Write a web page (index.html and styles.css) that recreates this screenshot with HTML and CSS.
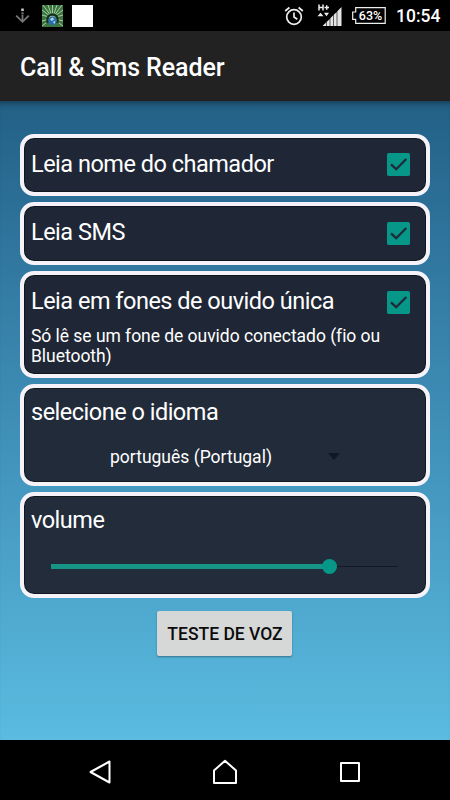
FILE: index.html
```html
<!DOCTYPE html>
<html lang="pt">
<head>
    <meta charset="utf-8" />
    <meta name="viewport" content="width=device-width, initial-scale=1">

    <title>Call &amp; Sms Reader</title>

    <link rel="stylesheet" href="styles.css">
</head>
<body>
    <div class="status-bar">
        <div class="status-left">
            <svg class="icon-download" width="15" height="16" viewBox="0 0 15 16">
                <rect x="6.2" y="0.5" width="2.6" height="2.6" fill="#c4c4c4" />
                <rect x="6.4" y="4.4" width="2.2" height="2" fill="#777" />
                <path d="M7.5 7V14M1.2 7.6L7.5 13.8L13.8 7.6" fill="none" stroke="#777" stroke-width="1.8" />
            </svg>
            <svg class="icon-app" width="21" height="22" viewBox="0 0 21 22">
                <rect width="21" height="22" fill="#3c7544" />
                <path d="M10.5 13L1 0M10.5 13L6 0M10.5 13L10.5 0M10.5 13L15 0M10.5 13L20 0M10.5 13L0 5M10.5 13L0 10M10.5 13L0 16M10.5 13L0 21M10.5 13L21 5M10.5 13L21 10M10.5 13L21 16M10.5 13L21 21" stroke="#a5cf9b" stroke-width="1" />
                <path d="M5.5 18V14A5 4.5 0 0 1 15.5 14V18" fill="none" stroke="#173421" stroke-width="2.4" />
                <circle cx="10.5" cy="15.8" r="4.2" fill="#286db0" />
                <path d="M8 14L11 12.5L12 14.5L9.5 16ZM11 17L13.5 15.5L12.5 19Z" fill="#b5dce8" />
            </svg>
            <div class="icon-blank"></div>
        </div>
        <div class="status-right">
            <svg class="icon-alarm" width="20" height="20" viewBox="0 0 20 20" fill="none" stroke="#eee" stroke-width="1.7">
                <circle cx="10" cy="11" r="7.3" />
                <path d="M10 6.5V11L13.3 13.2M1.2 5L5.4 1.5M18.8 5L14.6 1.5" />
            </svg>
            <svg class="icon-signal" width="25" height="23" viewBox="0 0 25 23">
                <path d="M2 0.5V6.5M6 0.5V6.5M2 3.5H6M7.5 3.5H12M9.7 1.3V5.7" stroke="#eee" stroke-width="1.5" />
                <path d="M0.5 12.3L3.5 8.8L6.5 12.3ZM7 8.8H12L9.5 12.3Z" fill="#eee" />
                <path d="M5.5 22L9 18.5V22ZM9.6 18L12.7 14.9V22H9.6ZM13.3 14.2L16.2 11.3V22H13.3ZM16.8 10.8L19.7 7.9V22H16.8ZM20.3 7.2L24.5 3V22H20.3Z" fill="#e5e5e5" />
            </svg>
            <div class="battery">
                <svg class="battery-shape" width="34" height="18" viewBox="0 0 34 18">
                    <path d="M3.7 0.7H33.2V16.4H3.7V12.4H0.7V5H3.7Z" fill="none" stroke="#eee" stroke-width="1.2" />
                </svg>
                <span class="battery-text">63%</span>
            </div>
            <span class="clock">10:54</span>
        </div>
    </div>

    <div class="app-bar">
        <span class="app-title">Call &amp; Sms Reader</span>
    </div>

    <div class="content">
        <div class="card card-caller">
            <div class="card-row">
                <span class="label">Leia nome do chamador</span>
                <svg class="checkbox" width="23" height="23" viewBox="0 0 23 23">
                    <rect width="23" height="23" rx="1.8" fill="#079788" />
                    <path d="M4 11.3L9.2 16.2L19.3 6" fill="none" stroke="#1f2a3a" stroke-width="2.3" />
                </svg>
            </div>
        </div>

        <div class="card card-sms">
            <div class="card-row">
                <span class="label">Leia SMS</span>
                <svg class="checkbox" width="23" height="23" viewBox="0 0 23 23">
                    <rect width="23" height="23" rx="1.8" fill="#079788" />
                    <path d="M4 11.3L9.2 16.2L19.3 6" fill="none" stroke="#1f2a3a" stroke-width="2.3" />
                </svg>
            </div>
        </div>

        <div class="card card-headset">
            <div class="card-row">
                <span class="label">Leia em fones de ouvido única</span>
                <svg class="checkbox" width="23" height="23" viewBox="0 0 23 23">
                    <rect width="23" height="23" rx="1.8" fill="#079788" />
                    <path d="M4 11.3L9.2 16.2L19.3 6" fill="none" stroke="#1f2a3a" stroke-width="2.3" />
                </svg>
            </div>
            <p class="hint">Só lê se um fone de ouvido conectado (fio ou Bluetooth)</p>
        </div>

        <div class="card card-language">
            <span class="label">selecione o idioma</span>
            <div class="spinner">
                <span class="spinner-text">português (Portugal)</span>
                <div class="spinner-arrow"></div>
            </div>
        </div>

        <div class="card card-volume">
            <span class="label">volume</span>
            <div class="slider">
                <div class="slider-fill" style="width: 80%"></div>
                <div class="slider-thumb"></div>
                <div class="slider-rest"></div>
            </div>
        </div>

        <button class="test-button">TESTE DE VOZ</button>
    </div>

    <div class="nav-bar">
        <svg class="nav-icon" width="26" height="26" viewBox="0 0 26 26">
            <path d="M3.5 13L22.5 2.5V23.5Z" />
        </svg>
        <svg class="nav-icon" width="26" height="26" viewBox="0 0 26 26">
            <path d="M2 11.5L13 1.8L24 11.5V24H2Z" />
        </svg>
        <svg class="nav-icon" width="26" height="26" viewBox="0 0 26 26">
            <path d="M4 4H22V22H4Z" />
        </svg>
    </div>
</body>
</html>
```

FILE: styles.css
```css
body {
    display: flex;
    flex-direction: column;
    height: 800px;
    margin: 0;
    font-family: Roboto, Arial, sans-serif;
    color: #fff;
    background-color: #000;
    overflow: hidden;
}

svg {
    display: block;
    flex: none;
}

.status-bar {
    display: flex;
    justify-content: space-between;
    height: 31px;
    background-color: #000;
}

.status-left, .status-right {
    display: flex;
    align-items: flex-start;
}

.icon-download {
    margin: 8px 0 0 15px;
}

.icon-app {
    margin: 5px 0 0 12px;
}

.icon-blank {
    width: 21px;
    height: 22px;
    margin: 5px 0 0 9px;
    background-color: #fff;
}

.icon-alarm {
    margin-top: 6px;
}

.icon-signal {
    margin: 4px 0 0 13px;
}

.battery {
    display: grid;
    width: 34px;
    height: 18px;
    margin: 7px 0 0 10px;
}

.battery-shape, .battery-text {
    grid-area: 1 / 1;
}

.battery-text {
    padding-left: 3px;
    font-size: 12.5px;
    font-weight: 500;
    line-height: 17px;
    text-align: center;
}

.clock {
    width: 45px;
    margin: 0 9px 0 10px;
    font-size: 17.5px;
    font-weight: 500;
    line-height: 33px;
    white-space: nowrap;
}

.app-bar {
    display: flex;
    align-items: center;
    height: 70px;
    padding-left: 20px;
    background-color: #222;
}

.app-title {
    font-size: 25px;
    font-weight: 500;
    line-height: 30px;
    letter-spacing: -0.08px;
    margin-top: 3px;
}

.content {
    display: flex;
    flex-direction: column;
    flex: 1;
    gap: 6px;
    padding: 33px 20px 0;
    background: linear-gradient(#236086, #3a87b0 42%, #5bbbe0);
    box-shadow: inset 0 7px 6px -5px rgba(0, 0, 0, 0.4);
}

.card {
    box-sizing: border-box;
    padding: 13px 16px 0 7px;
    border: 4px solid #f5f3f9;
    border-radius: 14px;
    background-color: #1f2736;
    box-shadow: inset 0 0 0 1px rgba(0, 0, 0, 0.45);
}

.card-caller {
    height: 62px;
}

.card-sms {
    height: 63px;
}

.card-headset {
    height: 107px;
}

.card-language {
    height: 102px;
    padding-top: 11px;
    background-color: #222b3a;
}

.card-volume {
    height: 106px;
    padding-top: 11px;
    background-color: #222c3b;
}

.card-row {
    display: flex;
    justify-content: space-between;
}

.label {
    display: block;
    font-size: 23.5px;
    line-height: 27px;
    letter-spacing: -0.5px;
    white-space: nowrap;
}

.checkbox {
    margin-top: 3px;
}

.card-caller .checkbox {
    margin-top: 2px;
}

.hint {
    margin: 11px 0 0;
    font-size: 17.5px;
    line-height: 20px;
    letter-spacing: -0.04px;
}

.spinner {
    display: flex;
    align-items: center;
    justify-content: space-between;
    height: 22px;
    margin-top: 20px;
    padding: 0 70px 0 79px;
}

.spinner-text {
    font-size: 17.5px;
}

.spinner-arrow {
    margin-bottom: 1px;
    border: 6px solid transparent;
    border-top: 7px solid #121725;
    border-bottom: 0;
}

.slider {
    display: flex;
    align-items: center;
    height: 15px;
    margin: 25px 12px 0 20px;
}

.slider-fill {
    height: 5px;
    background-color: #169486;
}

.slider-thumb {
    width: 15px;
    height: 15px;
    margin-left: -7px;
    border-radius: 50%;
    background-color: #079788;
}

.slider-rest {
    flex: 1;
    height: 1px;
    background-color: #121824;
}

.test-button {
    align-self: center;
    width: 135px;
    height: 45px;
    margin: 7px 1px 0 0;
    padding: 0 0 0 1px;
    border: 0;
    border-radius: 2px;
    background-color: #d6d8d8;
    box-shadow: 0 1px 2px rgba(0, 0, 0, 0.35);
    color: #0b0b0b;
    font-family: Roboto, Arial, sans-serif;
    font-size: 17.5px;
    font-weight: 500;
}

.nav-bar {
    display: flex;
    align-items: center;
    justify-content: space-between;
    height: 60px;
    padding: 3px 87px 0;
    box-sizing: border-box;
    background-color: #000;
}

.nav-icon {
    fill: none;
    stroke: #fff;
    stroke-width: 2;
    stroke-linejoin: round;
}
```
